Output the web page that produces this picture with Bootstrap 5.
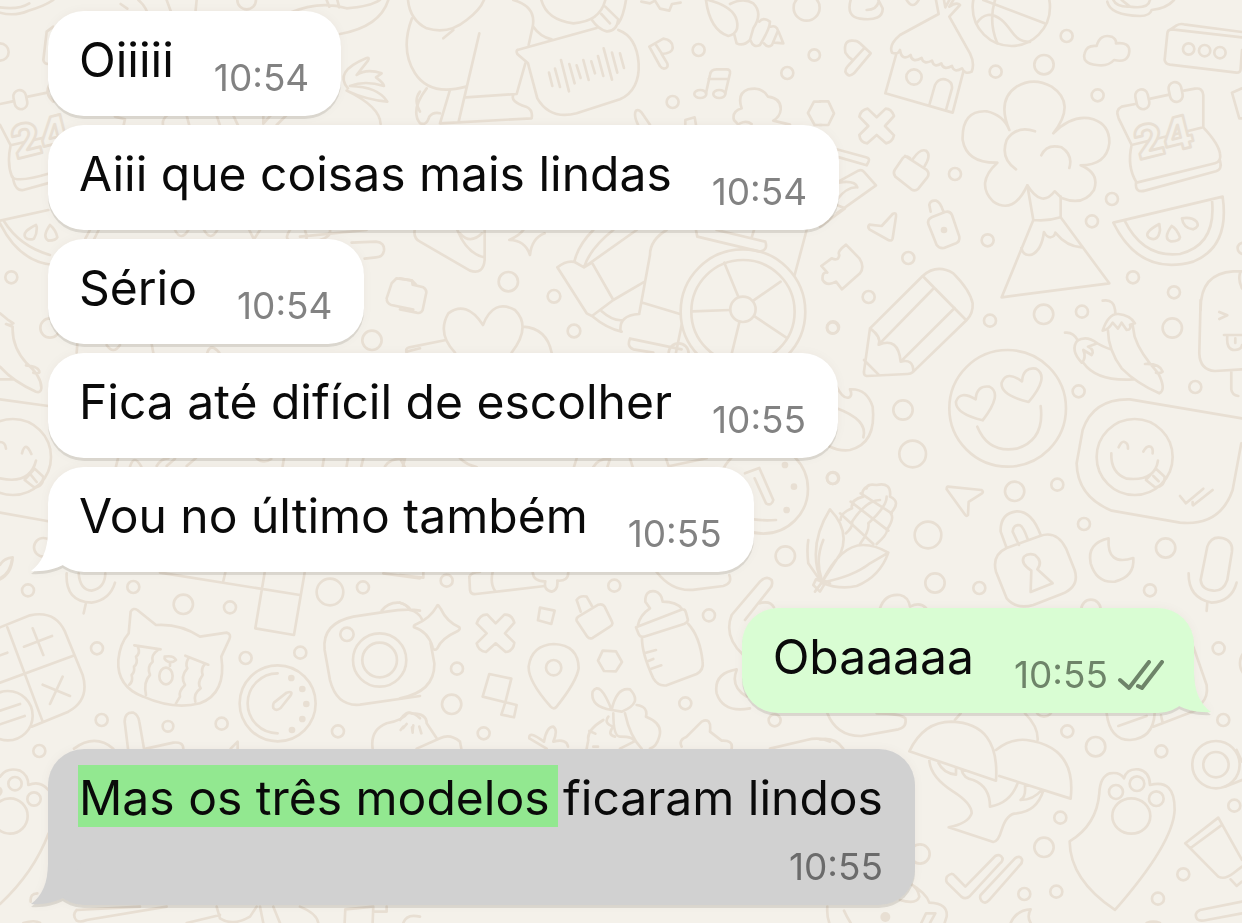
<!DOCTYPE html>
<html lang="pt-BR">
<head>
<meta charset="utf-8">
<meta name="viewport" content="width=device-width, initial-scale=1">
<title>Conversa</title>
<link href="https://cdn.jsdelivr.net/npm/bootstrap@5.3.0/dist/css/bootstrap.min.css" rel="stylesheet">
<style>
  body { background: #f4f1ea; font-family: Inter, "Liberation Sans", sans-serif; color: #0a0a0a; }
  .chat { padding: 11px 48px 17px; gap: 9px; isolation: isolate; }
  .wallpaper { z-index: -1; fill: none; stroke: #e8dfd3; stroke-width: 8; stroke-linecap: round; stroke-linejoin: round; }
  .wallpaper .dot { fill: #e8dfd3; stroke: none; }
  .wallpaper .cover { fill: #f4f1ea; }
  .wallpaper text { font: 800 136px Inter, sans-serif; fill: #f4f1ea; stroke-width: 8; }
  .bubble { --paper: #fff; background: var(--paper); border-radius: 36px; padding: 19px 32px 18px 31px; column-gap: 40px;
    filter: drop-shadow(0 3px 0 rgba(40, 30, 10, .11)) drop-shadow(0 0 4px rgba(40, 30, 10, .04)); }
  .bubble p { font-size: 48px; line-height: 60px; padding-bottom: 8px; }
  .bubble time { font-size: 37px; line-height: 40px; color: #828282; }
  .sent { --paper: #d9fdd3; margin-top: 27px; padding-right: 30px; }
  .sent time { color: #6e8469; }
  .picked { --paper: #d1d1d1; margin-top: 27px; }
  .picked p { padding-bottom: 19px; }
  .picked time { color: #6b6b6b; }
  .picked mark { background: #92e890; color: inherit; padding: 3px 8px 0 1px; margin: 0 -8px 0 -1px; }
  .tail { width: 50px; height: 42px; bottom: 0; left: -17px; fill: var(--paper); }
  .sent .tail { left: auto; right: -17px; }
  .ticks { width: 46px; height: 31px; margin: 0 0 4px 10px; fill: none; stroke: #6e8469; stroke-width: 4; stroke-linecap: round; stroke-linejoin: round; }
</style>
</head>
<body>
<main class="chat position-relative overflow-hidden min-vh-100 d-flex flex-column align-items-start">

<svg class="wallpaper position-absolute top-0 start-0 w-100 h-100" viewBox="0 0 1242 923" preserveAspectRatio="xMinYMin slice" aria-hidden="true">
  <!-- top left -->
  <g transform="scale(.3333)">
    <path d="M0 38Q45 50 85 32Q130 20 160 0M0 22Q55 30 88 10M362 12l20 14 M415 0Q440 20 450 60M500 0l22 60M590 0l-6 60"/>
    <path d="M712 0a28 28 0 0 0 56 0M865 40Q960 0 1040 25Q1110 20 1140 0M980 0l8 20M1012 0l6 22M1165 0Q1140 80 1020 102"/>
    <circle cx="0" cy="156" r="26"/><path d="M160 80L140 95L130 180Q132 192 145 192"/>
    <path d="M1044 265Q1000 215 1100 174Q1110 172 1104 182L1070 225Q1100 205 1145 220L1128 232Q1152 250 1152 258Q1095 240 1050 258Q1135 260 1162 305Q1100 300 1040 272Q1140 320 1142 372M1260 275Q1240 300 1260 335"/>
    <path d="M0 312L38 304M84 290L142 278M0 375L32 436L145 410M32 436Q20 490 36 530Q50 550 150 520M38 530Q45 575 70 570L150 548"/>
    <rect x="42" y="270" width="38" height="58" rx="19" transform="rotate(-12 61 299)"/><path d="M150 250q-18 30 10 55"/>
    <text transform="translate(48 478) rotate(-14)">24</text>
    <path d="M345 350l30 8l-5 22M490 378q-6-18 12-32M560 346l8 30M650 346l10 30M700 346l14 30M790 346v25l22-25M830 375l30-30M0 662L145 630M0 670Q60 790 165 795M12 664Q60 740 150 765"/>
    <path d="M108 675Q65 695 76 712Q85 722 102 716Q112 700 110 680ZM150 675Q125 710 145 722Q168 722 172 712Q168 690 150 675ZM296 690l-14 28M270 690l-14 26M525 690q18 36 40 0M612 690q20 36 40 0M748 690l14 28 18-28M870 690q-16 24-4 30M915 690q10 30 0 30M990 690q4 20-30 30M900 710l200-20"/>
    <path d="M1055 728L1128 725Q1155 728 1152 752Q1148 772 1128 772L1094 776"/>
    <circle cx="34" cy="832" r="18"/><path d="M1160 895l15-45 15-15 45 6 12 12M1160 895q0 16 14 20l66 14"/>
  </g>
  <!-- top centre -->
  <g transform="translate(400) scale(.3333)">
    <path d="M24 0Q30 60 80 85Q145 105 200 60Q240 30 252 0M130 115L160 90M36 55Q0 150 45 220Q90 290 198 260M238 100L176 365M150 270L120 370L395 355Q400 330 378 320Q330 305 340 285M198 292L350 282L376 190M340 0Q410 20 398 80L386 135M400 80Q420 110 455 118"/>
    <path d="M80 265Q30 330 60 370Q80 378 88 350Q100 335 120 340M424 0Q440 60 520 70Q600 65 616 0M616 20L655 58Q650 95 620 94Q595 88 576 60M604 42L630 70M678 0Q670 50 655 70"/>
    <path d="M352 150L590 84M655 90Q710 110 716 190Q720 270 660 298L530 340Q450 360 412 295L384 190L352 162Q348 154 352 150"/>
    <path d="M447 218l10 40M465 206l15 55M483 180l24 94M508 192l16 58M530 196l12 38M550 180l16 60M574 184l11 36M594 168l16 60M611 145l25 94M636 158l16 60M660 160l12 44"/>
    <path d="M724 5L750 10L765 2L780 26L808 32L816 12L842 8M748 140L790 116Q820 120 818 145Q816 160 785 162L802 190Q806 205 792 206Q785 205 780 198ZM768 134L786 162"/>
    <path d="M918 0Q930 90 985 108Q1020 100 1010 60Q1000 20 925 0M990 12Q1030-8 1060 10Q1090 40 1060 85L1050 120Q1030 140 1010 130L1002 100M1078 65Q1090 50 1110 65Q1110 85 1080 135Q1060 145 1052 122M1112 80Q1130 75 1134 92L1116 135Q1104 145 1092 130M1136 95L1150 130L1124 128"/>
    <circle cx="896" cy="150" r="18"/><circle cx="1243" cy="165" r="17"/><circle cx="1162" cy="219" r="18"/><circle cx="818" cy="306" r="18"/><circle cx="1220" cy="23" r="39"/>
    <path d="M918 280L930 225Q932 208 950 208H980Q992 208 990 220L976 280M926 237H986"/><ellipse cx="901" cy="282" rx="18" ry="12"/><ellipse cx="958" cy="282" rx="18" ry="12"/>
    <path d="M1025 325Q1010 280 1045 268Q1085 258 1104 290Q1145 295 1142 330Q1140 350 1120 362L1170 374M1025 325Q995 335 1002 360L1015 374M1020 370q20-10 35 2M714 374Q700 345 708 332Q718 325 730 345L750 374M856 374V360L884 352L888 374"/>
    <path d="M1260 305h-18l-18 34 20 36h20M44 690Q40 715 60 725L210 812Q250 825 254 780V690M172 690Q200 760 252 772M180 700q30 35 66 0M328 720Q360 705 370 690M328 720Q375 720 390 765Q395 715 434 700"/>
    <circle cx="325" cy="845" r="29"/><circle cx="462" cy="889" r="19"/>
  </g>
  <!-- centre -->
  <g transform="translate(400 230) scale(.3333)">
    <path d="M0 145L36 152L38 164L70 172Q82 180 78 192L68 240Q62 252 50 248L0 238M20 368Q15 355 28 352L138 330M165 368Q110 310 145 250Q200 210 249 285Q280 205 345 240Q395 290 335 368M370 290Q440 295 455 368"/>
    <circle cx="522" cy="303" r="19"/>
    <path d="M524 92Q535 45 580 0M640 0Q570 55 552 112L710 0M472 112Q500 90 524 96L552 112L576 98L640 210L576 258L560 250ZM640 210L734 155M800 0Q750 30 750 75L718 250M576 258Q620 295 665 305M605 244Q640 275 670 270M662 305Q655 255 718 252M728 218L840 252M690 326Q680 350 700 358L760 368M690 326L845 358M845 285L828 368"/>
    <circle cx="1029" cy="245" r="187"/><circle cx="1029" cy="245" r="155"/><circle cx="1029" cy="238" r="38"/>
    <path d="M973 98L1015 200M1142 155L1060 212M1158 322L1065 260M878 244L990 240M995 372L1018 278M888 0L892 20L1080 65Q1105 60 1096 35L950 0M1062 0l-6 20M1220 0L1184 135"/>
    <circle cx="836" cy="370" r="30"/>
    <path d="M0 685l14 26M180 685q20 20 50 26M522 711l8-26M580 711q15-26 50-24l-8 24M690 685l8 26M798 685l8 24L920 685"/>
    <circle cx="1090" cy="777" r="134"/><path d="M970 790Q990 880 1128 870M1035 730L1078 714L1120 810Q1115 830 1098 820L1064 745"/>
    <circle class="dot" cx="1155" cy="705" r="10"/><circle class="dot" cx="1182" cy="770" r="10"/><circle class="dot" cx="1160" cy="840" r="10"/>
    <circle cx="1298" cy="745" r="17"/><circle cx="1298" cy="294" r="17"/>
  </g>
  <!-- top right -->
  <g transform="translate(820) scale(.3333)">
    <path d="M92 0Q78 50 120 56Q190 65 188 25L175 0M140 30Q170 30 176 5M260 0q18 30 36 0M348 0L356 42L240 105Q205 135 216 158Q235 165 240 150Q245 185 272 165Q275 190 305 174Q310 195 336 182Q342 205 364 190Q370 212 396 198Q402 220 426 205Q435 225 455 215Q465 190 450 160L388 50L420 15Q410 5 388 20L400 0M372 0l4 22 12-22M228 165L196 280L398 338L430 215M328 315L345 255Q355 235 375 238Q398 245 396 265L378 330"/>
    <circle cx="282" cy="231" r="23"/><circle cx="574" cy="22" r="116"/>
    <path d="M490 0L674 70M525 0Q505 65 532 130M470 70Q500 25 545 60C580 90 580 125 630 126"/>
    <circle cx="740" cy="108" r="18"/><circle cx="672" cy="194" r="29"/><circle cx="527" cy="215" r="18"/><circle cx="833" cy="286" r="18"/>
    <path d="M830 195Q785 190 794 160Q800 135 830 138Q840 100 875 110Q890 118 888 130Q930 125 928 155Q925 190 882 180Q865 200 830 195M862 5Q870 45 960 48Q990 48 995 30Q1040 25 1062 0M880 0Q890 22 930 20L905 0M930 20Q985 28 990 0"/>
    <path d="M1056 88L1266 112M1056 88Q1042 88 1042 102L1034 180Q1036 192 1050 194L1250 218Q1262 218 1262 206L1266 150M1046 92L1070 76Q1080 70 1092 73L1266 96"/><circle cx="1106" cy="147" r="17"/><circle cx="1154" cy="152" r="17"/><circle cx="1200" cy="158" r="17"/>
    <path d="M76 158Q70 118 100 122Q112 122 120 130L152 160L102 220Q85 235 76 215Q76 205 82 200L132 145M76 158Q84 172 98 180M0 304H25L42 340L25 375H0"/>
    <path d="M143 326L170 352L197 326Q214 326 222 348L195 378L222 406Q218 426 198 430L170 405L142 430Q120 428 118 405L145 378L118 350Q122 330 143 326Z"/>
    <path d="M255 468L320 510Q330 520 322 532L295 566Q285 575 274 568L226 530Q218 520 224 510L248 475Q256 464 270 474M278 478Q300 445 318 452Q335 465 314 498M50 448L138 472Q150 475 146 484L140 496L50 470M55 545L115 512Q125 508 132 516L168 556L50 640M50 600Q80 560 112 562Q105 540 55 548M50 615L75 625L0 680"/>
    <circle cx="405" cy="522" r="18"/><circle cx="876" cy="597" r="18"/><circle cx="816" cy="664" r="18"/><circle cx="503" cy="721" r="18"/><circle cx="265" cy="774" r="18"/><circle cx="146" cy="891" r="18"/><circle cx="939" cy="832" r="18"/><circle cx="1062" cy="877" r="18"/><circle cx="1270" cy="745" r="17"/>
    <path d="M148 674L185 678L218 642Q230 635 228 650L218 715Q215 725 205 720L148 688Q142 680 148 674ZM332 635L328 615Q330 600 348 602Q360 605 370 634M325 672Q322 658 335 652L375 636Q390 632 396 645L418 710Q420 725 408 730L372 744Q358 746 350 735Z"/><circle class="dot" cx="372" cy="690" r="10"/>
    <path d="M78 734L118 775Q135 800 120 820L66 868L48 845Q20 860 8 840Q5 815 22 818L4 798L35 775Q55 785 58 765Q50 755 78 734Z"/>
    <path d="M568 390Q530 300 590 260Q640 230 695 260Q770 310 700 400Q760 340 820 358Q870 375 868 430Q860 495 782 496Q840 520 822 570Q790 620 725 594L704 574Q665 625 622 556Q580 645 520 605Q465 550 532 488Q440 490 428 420Q425 330 500 334Q550 345 568 390ZM645 394Q590 375 560 420Q540 475 588 508M664 466Q680 430 725 442Q760 465 748 504"/>
    <path d="M622 556L640 660L545 892L868 850L722 652V590M640 660Q680 665 722 652M604 744Q610 770 636 764Q665 750 672 696Q680 712 692 712Q704 710 706 698Q740 740 785 742"/>
    <path d="M946 312L905 320Q885 330 896 355L935 435L1150 382V285Q1148 262 1125 266L1092 272M992 296L1048 284M935 435Q920 500 950 548L1185 490Q1205 485 1200 460Q1195 430 1150 382M948 548Q945 580 975 572L1188 514Q1208 508 1200 482"/><rect x="948" y="268" width="38" height="60" rx="19" transform="rotate(-12 967 298)"/><rect x="1048" y="246" width="38" height="60" rx="19" transform="rotate(-12 1067 276)"/>
    <text transform="translate(956 480) rotate(-14)">24</text>
    <path d="M880 668L1208 590Q1230 740 1120 785Q960 830 880 668ZM914 662Q970 775 1080 762Q1190 735 1176 600M1018 672Q965 700 990 715Q1015 725 1020 690ZM1055 678Q1028 715 1052 724Q1078 725 1080 712Q1070 685 1055 678ZM1086 655Q1090 685 1120 688Q1140 680 1130 665Q1115 650 1086 655Z"/>
    <path d="M1266 265L1236 278L1258 355H1266M1266 814H1240Q1140 820 1142 930M1260 820q-6 20 6 45"/>
  </g>
  <!-- right middle -->
  <g transform="translate(820 300) scale(.3333)">
    <path d="M150 85L308-72Q350-110 400-80Q450-30 458 10Q460 40 440 60L280 215Q272 222 262 222L140 228Q130 226 132 214ZM150 85Q185 110 176 134L342-36M176 134Q235 110 242 185L404 24M242 185Q280 175 280 215M132 180L178 226M308-72L438 60"/>
    <circle cx="39" cy="82" r="18"/><circle cx="510" cy="62" r="18"/><circle cx="671" cy="43" r="29"/><circle cx="786" cy="35" r="18"/><circle cx="1057" cy="84" r="29"/><circle cx="776" cy="274" r="18"/><circle cx="1126" cy="261" r="18"/><circle cx="249" cy="330" r="29"/><circle cx="278" cy="462" r="40"/><circle cx="39" cy="534" r="18"/><circle cx="584" cy="574" r="29"/><circle cx="712" cy="554" r="18"/><circle cx="324" cy="705" r="40"/><circle cx="345" cy="849" r="29"/><circle cx="478" cy="864" r="18"/><circle cx="792" cy="672" r="18"/><circle cx="1037" cy="744" r="29"/><circle cx="990" cy="871" r="18"/><circle cx="813" cy="928" r="29"/>
    <circle cx="563" cy="325" r="175"/>
    <path d="M488 361Q405 340 408 305Q420 270 467 298Q470 255 508 260Q550 280 488 361ZM626 306Q540 285 545 248Q560 210 606 244Q610 200 648 206Q690 230 626 306ZM472 380Q505 460 590 446Q675 420 662 318"/>
    <path d="M848 2Q885-5 886 40M848 92Q865 40 895 42Q930 45 945 70L930 74Q935 90 920 90L905 68L894 86L878 68Q865 90 848 92M864 92Q865 150 905 205Q950 250 1018 280Q1040 270 1015 220Q960 160 944 110L938 75M735 98Q760 95 774 122M785 188Q750 150 772 122Q800 105 832 130L804 140Q825 150 815 165L790 150Q800 175 785 188M832 130Q860 145 874 148M790 188Q830 245 940 238M975 192Q1020 190 1028 215Q1020 222 1008 218"/>
    <path d="M1142 0L1138 160Q1140 210 1185 213L1266 208M1234 210V268Q1236 285 1255 288M1198 36L1222 46L1198 57M1212 105H1266M1222 108Q1218 150 1245 150Q1265 148 1266 135M1246 115v14"/>
    <path d="M1266 355L930 298Q820 295 788 390L770 490Q772 590 875 632L1080 668Q1200 680 1238 570L1264 430"/><circle cx="944" cy="471" r="114"/><path d="M874 460Q872 520 920 536Q1005 545 1014 482M896 442Q905 422 914 426Q925 430 924 446M970 455Q980 435 992 440Q1000 445 998 460M978 540L1008 506L1034 530Q1036 560 1005 562ZM1000 528L1016 544M1080 588L1098 610L1150 566M1120 616L1178 570M1118 606v8"/>
    <path d="M384 560L484 570Q492 575 486 580L446 606L444 645Q440 650 436 645L380 568Q380 560 384 560ZM560 744L542 695Q540 640 590 634Q635 632 662 705M560 744Q515 765 528 815L560 895Q590 930 640 915L725 882Q780 860 764 810L738 745Q710 690 660 708ZM597 735L578 695Q580 672 600 676Q610 680 624 720"/><path d="M632 876L634 812Q600 790 612 770Q625 758 645 765Q670 785 652 808L698 850Z"/>
    <path d="M866 715Q800 730 812 790Q830 850 885 845Q945 830 940 774Q860 800 866 715ZM1162 740Q1175 705 1210 715Q1240 725 1236 755L1222 840Q1210 875 1180 872Q1145 870 1142 840ZM1106 820Q1105 895 1175 908Q1235 905 1250 848M1162 908l-2 25"/>
    <path d="M50 260Q70 300 88 292Q98 285 90 268Q140 265 158 320Q170 430 90 450Q60 455 25 438M50 325Q145 360 130 412"/>
    <path d="M60 640L160 732M92 605L205 692M122 580L215 640M148 556Q120 570 130 590Q90 600 96 625Q60 640 62 660M170 732Q205 700 200 690Q225 655 212 640Q245 605 210 590Q215 545 170 555Q140 550 140 565M78 700Q100 680 96 665Q140 600 180 600M120 732Q150 690 145 670Q200 620 200 590M30 628Q90 690 62 760L5 848Q-40 740 30 628ZM5 848Q60 735 130 735Q165 735 205 758Q180 830 110 858Q60 870 5 848ZM5 848Q100 830 150 790L205 758M5 848L-15 875M180 925Q195 880 240 885Q265 890 270 920Q300 905 318 924"/>
  </g>
  <!-- left middle -->
  <g transform="translate(0 300) scale(.3333)">
    <path d="M0 40L22 58L40 70Q30 78 18 72L38 80Q35 140 80 190Q125 230 124 265Q122 280 108 275Q40 245 0 200M78 196Q120 200 118 218Q110 222 100 218M0 238H40"/>
    <circle cx="150" cy="84" r="29"/><circle cx="1116" cy="121" r="29"/><circle cx="39" cy="471" r="114"/>
    <path d="M0 298L145 318M0 638L145 664M0 535Q90 555 108 482M0 426q16 0 18 20M66 460q10-40 28 2M74 540L104 506L130 530Q130 560 102 562ZM92 524l18 22M0 795Q10 775 38 772Q35 820 0 838"/>
    <path d="M232 132l-2 26M320 135q20 30 40 0M455 132l5 26M622 158q10-30 36 0M1220 155l40-10M354 475l-6 24M390 500q12-40 34 0M470 498q15-24 35-23M500 498l25-22M560 498l28-24M770 475q20 18 44 2M852 475l-4 24M972 475l-4 24M1044 475l-4 24M1090 475l-6 24M1155 499q15-25 60-24l-6 24"/>
    <circle cx="130" cy="742" r="28"/>
  </g>
  <!-- lower left -->
  <g transform="translate(0 560) scale(.3333)">
    <path d="M200 40Q195 125 275 128Q330 120 345 68M236 40Q240 90 275 92Q315 85 316 40M258 128l-7 32M480 38L900 105M676 38l-6 25M794 38L766 205L882 225L914 38M0 55Q30 40 36 0M1150 40l110 15"/>
    <circle cx="84" cy="91" r="18"/><circle cx="400" cy="81" r="18"/><circle cx="550" cy="133" r="29"/><circle cx="690" cy="142" r="18"/><circle cx="990" cy="96" r="40"/><circle cx="1089" cy="82" r="18"/><circle cx="291" cy="265" r="18"/><circle cx="737" cy="294" r="18"/><circle cx="901" cy="278" r="18"/><circle cx="305" cy="480" r="18"/><circle cx="504" cy="499" r="16"/><circle cx="665" cy="491" r="18"/><circle cx="1014" cy="514" r="18"/><circle cx="118" cy="573" r="18"/>
    <path d="M0 202L90 166Q165 150 195 215L248 345Q270 420 205 455L95 500M22 202L128 485M0 368L218 288M98 205L130 285M72 260L156 228M128 374L210 408M188 350L150 432M0 286l22-8"/><circle class="cover" cx="24" cy="467" r="74"/><path d="M0 452L60 432M0 493L74 468"/>
    <path d="M386 220L392 155Q400 142 412 150L468 195Q540 190 600 230L680 218Q695 222 688 238L664 290Q680 400 600 430Q520 450 430 410Q350 380 355 300Q360 250 386 220ZM403 256L482 268M556 287L625 314M414 262Q422 280 408 290Q415 310 402 320Q405 335 395 345Q400 365 388 374M474 270Q452 285 458 305Q440 320 450 345Q430 365 438 405M566 294Q555 310 562 325Q540 350 555 375Q535 395 540 410L528 430M615 312Q602 325 608 345Q590 370 602 385Q580 400 586 425M494 290Q520 285 528 300Q515 310 505 305Q492 300 494 290M510 308v10"/><ellipse cx="498" cy="348" rx="20" ry="25"/>
    <circle cx="833" cy="430" r="114"/><path d="M833 340A90 90 0 0 0 833 520M822 428L860 398Q880 392 872 406L842 444Q828 455 820 444Q818 435 822 428Z"/>
    <circle class="dot" cx="874" cy="354" r="10"/><circle class="dot" cx="907" cy="387" r="10"/><circle class="dot" cx="919" cy="432" r="10"/><circle class="dot" cx="907" cy="477" r="10"/><circle class="dot" cx="876" cy="510" r="10"/>
    <path d="M1260 152Q1220 145 1160 155L1060 170Q965 190 974 270L990 360Q1010 440 1080 434L1260 408M1145 152Q1165 125 1200 128Q1225 135 1230 148"/><circle cx="1041" cy="223" r="20"/><circle cx="1139" cy="300" r="80"/><circle cx="1139" cy="300" r="52"/>
    <path d="M222 566Q285 520 340 566M384 566L374 485Q375 455 400 458Q415 465 418 485L432 566M438 566L520 548Q550 545 550 566M692 566L713 545V566M1118 566Q1110 510 1160 490Q1210 480 1222 460Q1240 455 1260 475M1220 492l-10 12M1240 496l-2 16"/>
    <path d="M0 650Q20 620 60 632Q85 645 85 675Q120 660 145 690M0 1032Q100 940 146 820M92 1025Q90 1000 112 1000"/><circle cx="45" cy="671" r="20"/><circle cx="102" cy="717" r="20"/><circle cx="30" cy="768" r="53"/><circle cx="-8" cy="694" r="12"/>
    <path d="M230 1050L420 1040M230 1050Q215 1065 230 1082Q240 1088 260 1080L500 1040M650 1040L660 1075Q700 1100 750 1070L770 1040M560 1089L660 1065M780 1040L790 1089M820 1040L840 1089M900 1040Q950 1060 955 1089M1034 1089L1036 1048L1120 1040L1118 1089M1120 1055H1160V1040M1210 1089Q1220 1060 1260 1070M70 1089q35-10 50 0"/>
  </g>
  <!-- lower centre -->
  <g transform="translate(400 540) scale(.3333)">
    <path d="M0 105L70 113V96M210 150L208 110Q215 96 240 96M210 150Q212 164 228 162L435 138M278 96Q270 130 285 152M398 96Q400 125 436 124Q430 150 455 155Q475 150 472 122Q505 125 505 96M770 96Q820 160 890 148L970 138Q998 130 988 105M0 188q20 6 30 22Q55 215 66 238M0 475Q105 455 103 370L92 310"/>
    <circle cx="140" cy="122" r="18"/><circle cx="643" cy="137" r="18"/><circle cx="927" cy="226" r="18"/><circle cx="171" cy="386" r="18"/><circle cx="155" cy="493" r="29"/><circle cx="251" cy="580" r="18"/><circle cx="856" cy="490" r="18"/><circle cx="1124" cy="541" r="18"/><circle cx="1156" cy="48" r="29"/>
    <path d="M115 196L122 206Q140 245 178 262Q182 268 172 274Q125 295 112 325Q102 335 98 322Q85 275 42 262Q40 255 50 252Q90 235 110 200Q112 194 115 196ZM262 224L287 250L313 224Q335 222 343 248L315 280L343 308Q340 334 317 336L287 310L258 336Q235 334 230 310L260 280L230 250Q240 222 262 224Z"/>
    <path d="M420 203L464 212L454 252L414 241ZM268 402L334 416L316 487L248 470ZM316 487L350 495L342 532L304 524ZM542 215L530 180Q540 165 560 170L576 198M535 230L595 194Q608 190 614 200L636 245Q640 255 630 260L578 294Q568 298 562 290L530 242Q528 235 535 230Z"/>
    <path d="M462 312Q535 315 536 385Q530 425 470 500Q462 510 452 500Q385 425 386 380Q395 315 462 312ZM608 332L648 334L666 366L648 394L612 393L594 362Z"/><circle cx="461" cy="383" r="23"/>
    <path d="M714 255Q720 225 750 205L736 185Q735 150 765 154Q785 160 788 185Q830 185 846 207M708 262L848 208Q856 208 858 218L864 240Q862 248 852 252L732 290Q720 292 716 282ZM726 292Q725 340 760 415Q775 440 800 436L890 402Q912 390 908 365Q900 290 865 252M732 340L768 330M740 365L760 357M750 388L784 376"/>
    <path d="M1030 345Q970 290 995 225L1080 125Q1100 105 1115 120Q1120 135 1110 145L1035 240M1080 190Q1110 180 1122 202M1010 388Q940 400 950 460Q970 520 1050 505M1010 390Q990 440 1040 470M1240 135L1260 155L1275 130L1248 118ZM1258 118L1225 70Q1220 30 1225 0M1265 118Q1245 60 1270 0M1265 118L1290 130"/>
    <path d="M0 540Q20 510 35 520Q80 520 80 550L110 595M10 560l-8 10M36 562l2 16M58 560l6 20M50 626L120 595Q150 580 180 605L184 626M388 595Q385 570 432 605Q440 560 460 560Q475 570 460 605Q500 595 504 620M388 595L440 626M635 510Q570 500 578 455Q600 420 635 510M635 510Q650 440 690 448Q730 490 665 515ZM710 495Q745 500 738 530Q790 550 778 590Q770 620 750 626M640 520Q640 590 660 590Q705 590 702 605L660 626M675 520Q690 590 725 626M610 540Q560 570 565 600L560 626M625 530Q610 550 640 560Q620 585 645 590M568 573l18 8M580 620h14"/>
    <path d="M845 620Q835 600 860 590L905 545Q935 530 930 575L965 602Q1000 600 995 626M1110 626L1220 600Q1260 590 1290 605"/>
  </g>
  <!-- lower right -->
  <g transform="translate(820 580) scale(.3333)">
    <circle cx="1196" cy="205" r="18"/><circle cx="1210" cy="420" r="18"/><circle cx="742" cy="454" r="18"/><circle cx="827" cy="500" r="29"/><circle cx="1024" cy="514" r="18"/><circle cx="1243" cy="677" r="18"/><circle cx="721" cy="713" r="18"/><circle cx="672" cy="802" r="29"/><circle cx="1090" cy="883" r="18"/><circle cx="1014" cy="956" r="18"/><circle cx="709" cy="935" r="18"/><circle cx="613" cy="942" r="18"/><circle cx="300" cy="822" r="29"/><circle cx="672" cy="384" r="26"/><circle cx="1310" cy="250" r="50"/>
    <path d="M1120 200L1160 315Q1165 350 1145 370M1000 440L1125 392M1028 428l-5-22M860 400Q870 480 930 480Q1000 475 1004 400M895 438L980 408"/>
    <path d="M22 400Q50 470 125 468L235 448Q262 440 256 415Q240 400 170 400M0 478Q45 470 70 506"/>
    <path d="M268 514Q310 425 395 425Q540 430 528 602ZM528 510Q570 475 620 480Q770 500 752 656L538 588M405 420L422 400M615 400Q655 440 653 480M328 540Q330 590 400 635Q455 670 455 700Q445 730 386 742L520 786Q535 785 545 750Q560 700 590 700Q650 695 670 632M355 548Q370 580 408 584V565M425 570Q430 595 460 600Q510 620 510 680Q570 670 592 612M615 618Q618 650 602 660Q640 660 665 630"/>
    <circle cx="1188" cy="554" r="71"/><circle cx="1188" cy="554" r="38"/><path d="M1250 510L1266 545M1215 620L1266 600"/>
    <path d="M749 784Q830 735 838 640Q840 590 870 580Q900 575 912 595Q920 565 955 568Q990 575 990 615Q1065 595 1064 690Q1060 790 885 990Q750 900 749 784Z"/><circle cx="888" cy="636" r="21"/><circle cx="951" cy="611" r="22"/><circle cx="1009" cy="656" r="22"/><ellipse cx="934" cy="708" rx="57" ry="53"/>
    <path d="M1096 790L1195 713L1266 840M1096 790L1195 890Q1215 900 1240 880L1266 860M1112 804L1204 736M1232 898L1250 918L1266 905M381 890Q395 875 405 888L436 920L526 828Q540 820 548 835Q548 845 540 850L450 948Q437 960 424 950L381 908Q376 900 381 890ZM482 945L585 835Q600 825 606 838Q608 848 600 855L508 960Q495 975 484 962Q478 953 482 945Z"/>
    <path d="M22 980Q20 1010 28 1029M72 992Q80 1010 92 1029M240 960Q290 975 298 950Q295 925 270 910Q320 940 328 968Q385 970 380 1010L374 1029M304 1029L318 1000H346L330 1029M572 1029Q590 990 632 988Q620 1010 632 1029M1266 965L1140 990Q1120 1000 1132 1018Q1140 1025 1160 1020L1266 1000M980 1029q20-8 40 0"/><circle class="dot" cx="196" cy="1011" r="15"/>
  </g>
</svg>

<article class="bubble d-flex position-relative"><p class="m-0">Oiiiii</p><time class="align-self-end">10:54</time></article>
<article class="bubble d-flex position-relative"><p class="m-0">Aiii que coisas mais lindas</p><time class="align-self-end">10:54</time></article>
<article class="bubble d-flex position-relative"><p class="m-0">Sério</p><time class="align-self-end">10:54</time></article>
<article class="bubble d-flex position-relative"><p class="m-0">Fica até difícil de escolher</p><time class="align-self-end">10:55</time></article>
<article class="bubble d-flex position-relative">
  <svg class="tail position-absolute" viewBox="0 0 50 42" aria-hidden="true"><path d="M17 0C17 20 11 33 0 41C12 42 24 39 32 35L50 0Z"/></svg>
  <p class="m-0">Vou no último também</p><time class="align-self-end">10:55</time>
</article>
<article class="bubble sent d-flex position-relative align-self-end">
  <svg class="tail position-absolute" viewBox="0 0 50 42" aria-hidden="true"><path d="M33 0C33 20 39 33 50 41C38 42 26 39 18 35L0 0Z"/></svg>
  <p class="m-0">Obaaaaa</p>
  <div class="d-flex align-items-end align-self-end"><time>10:55</time>
    <svg class="ticks" viewBox="0 0 46 31" role="img" aria-label="Entregue"><path d="M2 20L11 28L31 2M20 26L24 28L44 2"/></svg></div>
</article>
<article class="bubble picked d-flex flex-column position-relative">
  <svg class="tail position-absolute" viewBox="0 0 50 42" aria-hidden="true"><path d="M17 0C17 20 11 33 0 41C12 42 24 39 32 35L50 0Z"/></svg>
  <p class="m-0"><mark>Mas os três modelos</mark> ficaram lindos</p><time class="align-self-end">10:55</time>
</article>
</main>
<script src="https://cdn.jsdelivr.net/npm/bootstrap@5.3.0/dist/js/bootstrap.bundle.min.js"></script>
</body>
</html>
